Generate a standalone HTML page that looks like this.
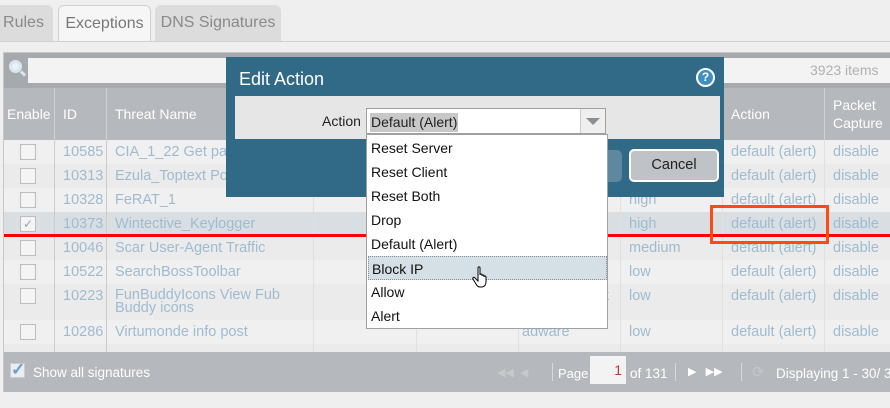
<!DOCTYPE html>
<html><head><style>
*{margin:0;padding:0;box-sizing:border-box}
body{width:890px;height:408px;background:#efefef;font-family:"Liberation Sans",sans-serif;position:relative;overflow:hidden}
.a{position:absolute}
.tab{position:absolute;top:5px;height:37px;background:#dcdcdc;border-radius:6px 6px 0 0;color:#8a8a8a;font-size:16px;line-height:36px;text-align:center}
.row{position:absolute;left:4px;width:886px;height:24px}
.cell{position:absolute;top:0;height:100%;color:#9fbbd0;font-size:14.5px;line-height:24px;white-space:nowrap;overflow:hidden}
.vl{position:absolute;top:88px;height:264px;width:1px;background:#e0e0e0}
.cb{position:absolute;left:16px;top:4px;width:16px;height:16px;border:1px solid #bdbdbd;background:#f4f4f4}
.hd{position:absolute;top:88px;height:52px;color:#fff;font-size:14px;line-height:52px}
.dd{position:absolute;left:1px;width:239px;height:24px;font-size:14px;line-height:24px;padding-left:3px;color:#111}
</style></head><body>
<div class="tab" style="left:-6px;width:59px">Rules</div>
<div class="tab" style="left:58px;width:93px;background:#f6f6f6;border:1px solid #d0d0d0;border-bottom:none;color:#777">Exceptions</div>
<div class="tab" style="left:155px;width:126px">DNS Signatures</div>
<div class="a" style="left:0;top:41px;width:890px;height:1px;background:#d0d0d0"></div>

<div class="a" style="left:3px;top:52px;width:887px;height:340px;background:#f0f0f0;border:1px solid #c8c8c8"></div>
<div class="a" style="left:4px;top:53px;width:886px;height:35px;background:#a6aaaf"></div>
<div class="a" style="left:28px;top:58px;width:862px;height:25px;background:#f3f3f3"></div>
<div class="a" style="left:9px;top:60px;width:13px;height:13px;border-radius:50%;border:3px solid #d9e6f0;background:#eaf2f8"></div>
<div class="a" style="left:20px;top:72px;width:6px;height:3px;background:#d9e6f0;transform:rotate(45deg)"></div>
<div class="a" style="left:810px;top:62px;color:#b0b0b0;font-size:14px">3923 items</div>
<div class="a" style="left:4px;top:88px;width:886px;height:52px;background:#b5b8bc"></div>
<div class="hd" style="left:7px">Enable</div>
<div class="hd" style="left:63px">ID</div>
<div class="hd" style="left:115px">Threat Name</div>
<div class="hd" style="left:731px">Action</div>
<div class="hd" style="left:833px;line-height:18px;padding-top:8px">Packet<br>Capture</div>

<div class="row" style="top:140px;background:#f0f0f0"></div>
<div class="row" style="top:164px;background:#ebebeb"></div>
<div class="row" style="top:188px;background:#f0f0f0"></div>
<div class="row" style="top:212px;background:#d9dee2"></div>
<div class="row" style="top:236px;background:#ebebeb"></div>
<div class="row" style="top:260px;background:#f0f0f0"></div>
<div class="row" style="top:284px;height:36px;background:#ebebeb"></div>
<div class="row" style="top:320px;background:#f0f0f0"></div>
<div class="row" style="top:344px;height:8px;background:#ebebeb"></div>

<div class="vl" style="left:54px;background:#ccc"></div><div class="vl" style="left:106px;background:#ccc"></div>
<div class="vl" style="left:313px"></div><div class="vl" style="left:416px"></div><div class="vl" style="left:518px"></div>
<div class="vl" style="left:620px"></div><div class="vl" style="left:722px"></div><div class="vl" style="left:824px"></div>
<div class="a" style="left:54px;top:88px;width:1px;height:52px;background:#d0d2d4"></div>
<div class="a" style="left:106px;top:88px;width:1px;height:52px;background:#d0d2d4"></div>
<div class="a" style="left:722px;top:88px;width:1px;height:52px;background:#d0d2d4"></div>
<div class="a" style="left:824px;top:88px;width:1px;height:52px;background:#d0d2d4"></div>

<div class="a" style="left:0;top:0">
<div class="row" style="top:140px"><div class="cb"></div><div class="cell" style="left:59px">10585</div><div class="cell" style="left:111px">CIA_1_22 Get pas</div><div class="cell" style="left:727px">default (alert)</div><div class="cell" style="left:829px">disable</div></div>
<div class="row" style="top:164px"><div class="cb"></div><div class="cell" style="left:59px">10313</div><div class="cell" style="left:111px">Ezula_Toptext Pop</div><div class="cell" style="left:727px">default (alert)</div><div class="cell" style="left:829px">disable</div></div>
<div class="row" style="top:188px"><div class="cb"></div><div class="cell" style="left:59px">10328</div><div class="cell" style="left:111px">FeRAT_1</div><div class="cell" style="left:625px">high</div><div class="cell" style="left:727px">default (alert)</div><div class="cell" style="left:829px">disable</div></div>
<div class="row" style="top:212px"><div class="cb" style="color:#8fa8c0;font-size:12px;line-height:14px;text-align:center">✓</div><div class="cell" style="left:59px">10373</div><div class="cell" style="left:111px">Wintective_Keylogger</div><div class="cell" style="left:625px">high</div><div class="cell" style="left:727px">default (alert)</div><div class="cell" style="left:829px">disable</div></div>
<div class="row" style="top:236px"><div class="cb"></div><div class="cell" style="left:59px">10046</div><div class="cell" style="left:111px">Scar User-Agent Traffic</div><div class="cell" style="left:625px">medium</div><div class="cell" style="left:727px">default (alert)</div><div class="cell" style="left:829px">disable</div></div>
<div class="row" style="top:260px"><div class="cb"></div><div class="cell" style="left:59px">10522</div><div class="cell" style="left:111px">SearchBossToolbar</div><div class="cell" style="left:625px">low</div><div class="cell" style="left:727px">default (alert)</div><div class="cell" style="left:829px">disable</div></div>
<div class="row" style="top:284px;height:36px"><div class="cb"></div><div class="cell" style="left:59px">10223</div><div class="cell" style="left:111px;line-height:13px;padding-top:5px">FunBuddyIcons View Fub<br>Buddy icons</div><div class="cell" style="left:598px;height:24px">k</div><div class="cell" style="left:625px;height:24px">low</div><div class="cell" style="left:727px;height:24px">default (alert)</div><div class="cell" style="left:829px;height:24px">disable</div></div>
<div class="row" style="top:320px"><div class="cb"></div><div class="cell" style="left:59px">10286</div><div class="cell" style="left:111px">Virtumonde info post</div><div class="cell" style="left:518px">adware</div><div class="cell" style="left:625px">low</div><div class="cell" style="left:727px">default (alert)</div><div class="cell" style="left:829px">disable</div></div>
</div>

<div class="a" style="left:4px;top:352px;width:886px;height:40px;background:#b5b8bc"></div>
<div class="a" style="left:10px;top:363px;width:15px;height:15px;background:#e8eef3;border:1px solid #ccc;color:#6f9cc4;font-size:17px;line-height:12px;font-weight:bold">✓</div>
<div class="a" style="left:33px;top:365px;color:#fff;font-size:13.5px">Show all signatures</div>
<div class="a" style="left:497px;top:366px;color:#c6c8cb;font-size:11px">◀◀ &nbsp;◀</div>
<div class="a" style="left:552px;top:363px;width:1px;height:18px;background:#d8d8d8"></div>
<div class="a" style="left:558px;top:366px;color:#fff;font-size:13px">Page</div>
<div class="a" style="left:590px;top:356px;width:36px;height:28px;background:#f3f3f3;color:#c33;font-size:14px;text-align:right;padding:6px 4px 0 0">1</div>
<div class="a" style="left:630px;top:366px;color:#fff;font-size:13.5px">of 131</div>
<div class="a" style="left:675px;top:363px;width:1px;height:18px;background:#d8d8d8"></div>
<div class="a" style="left:688px;top:365px;color:#fff;font-size:11px">▶ &nbsp;&nbsp;▶▶</div>
<div class="a" style="left:741px;top:363px;width:1px;height:18px;background:#d8d8d8"></div>
<div class="a" style="left:752px;top:363px;color:#c6c8cb;font-size:15px">⟳</div>
<div class="a" style="left:776px;top:366px;color:#fff;font-size:13.5px;white-space:nowrap">Displaying 1 - 30/ 39</div>

<div class="a" style="left:4px;top:234px;width:886px;height:3px;background:#ff0000"></div>
<div class="a" style="left:710px;top:205px;width:119px;height:39px;border:3px solid #ff4a12"></div>

<div class="a" style="left:226px;top:57px;width:498px;height:140px;background:#306a87"></div>
<div class="a" style="left:239px;top:69px;color:#fff;font-size:18px">Edit Action</div>
<div class="a" style="left:696px;top:68px;width:19px;height:19px;border-radius:50%;background:#3f8fc0;border:2px solid #fff;color:#fff;font-size:12px;font-weight:bold;text-align:center;line-height:15px">?</div>
<div class="a" style="left:235px;top:96px;width:485px;height:43px;background:#e6e6e6"></div>
<div class="a" style="left:322px;top:113px;color:#222;font-size:14px">Action</div>
<div class="a" style="left:366px;top:108px;width:240px;height:26px;background:#fff;border:1px solid #a0a0a0"></div>
<div class="a" style="left:370px;top:113px;height:19px;background:#c8c8c8;color:#222;font-size:14px;line-height:19px;padding:0 1px">Default (Alert)</div>
<div class="a" style="left:580px;top:109px;width:25px;height:24px;background:#efefef;border-left:1px solid #ccc"></div>
<div class="a" style="left:586px;top:118px;width:0;height:0;border-left:7px solid transparent;border-right:7px solid transparent;border-top:7px solid #8a8f94"></div>
<div class="a" style="left:560px;top:150px;width:62px;height:32px;background:#5d88a0;border-radius:5px"></div>
<div class="a" style="left:629px;top:149px;width:90px;height:33px;background:#bfc2c7;border:2px solid #fff;border-radius:5px;color:#222;font-size:14.5px;text-align:center;line-height:29px">Cancel</div>

<div class="a" style="left:366px;top:134px;width:242px;height:195px;background:#fff;border:1px solid #a0a0a0">
<div class="dd" style="top:1px">Reset Server</div>
<div class="dd" style="top:25px">Reset Client</div>
<div class="dd" style="top:49px">Reset Both</div>
<div class="dd" style="top:73px">Drop</div>
<div class="dd" style="top:97px">Default (Alert)</div>
<div class="dd" style="top:121px;background:#d5dfe6;border:1px dotted #8a9098">Block IP</div>
<div class="dd" style="top:145px">Allow</div>
<div class="dd" style="top:169px">Alert</div>
</div>
<svg class="a" style="left:472px;top:266px" width="20" height="24" viewBox="0 0 20 24"><path d="M6 2c0-1.5 2-1.5 2 0v7c0-1.3 2-1.3 2 0v1c0-1.3 2-1.3 2 0v1c0-1.3 2-1.3 2 0v5c0 3-2 5-4 5H8c-2 0-3-1-4-3L1 13c-.7-1.2.7-2.3 1.7-1.3L6 15z" fill="#fff" stroke="#000" stroke-width="1"/></svg>
</body></html>
